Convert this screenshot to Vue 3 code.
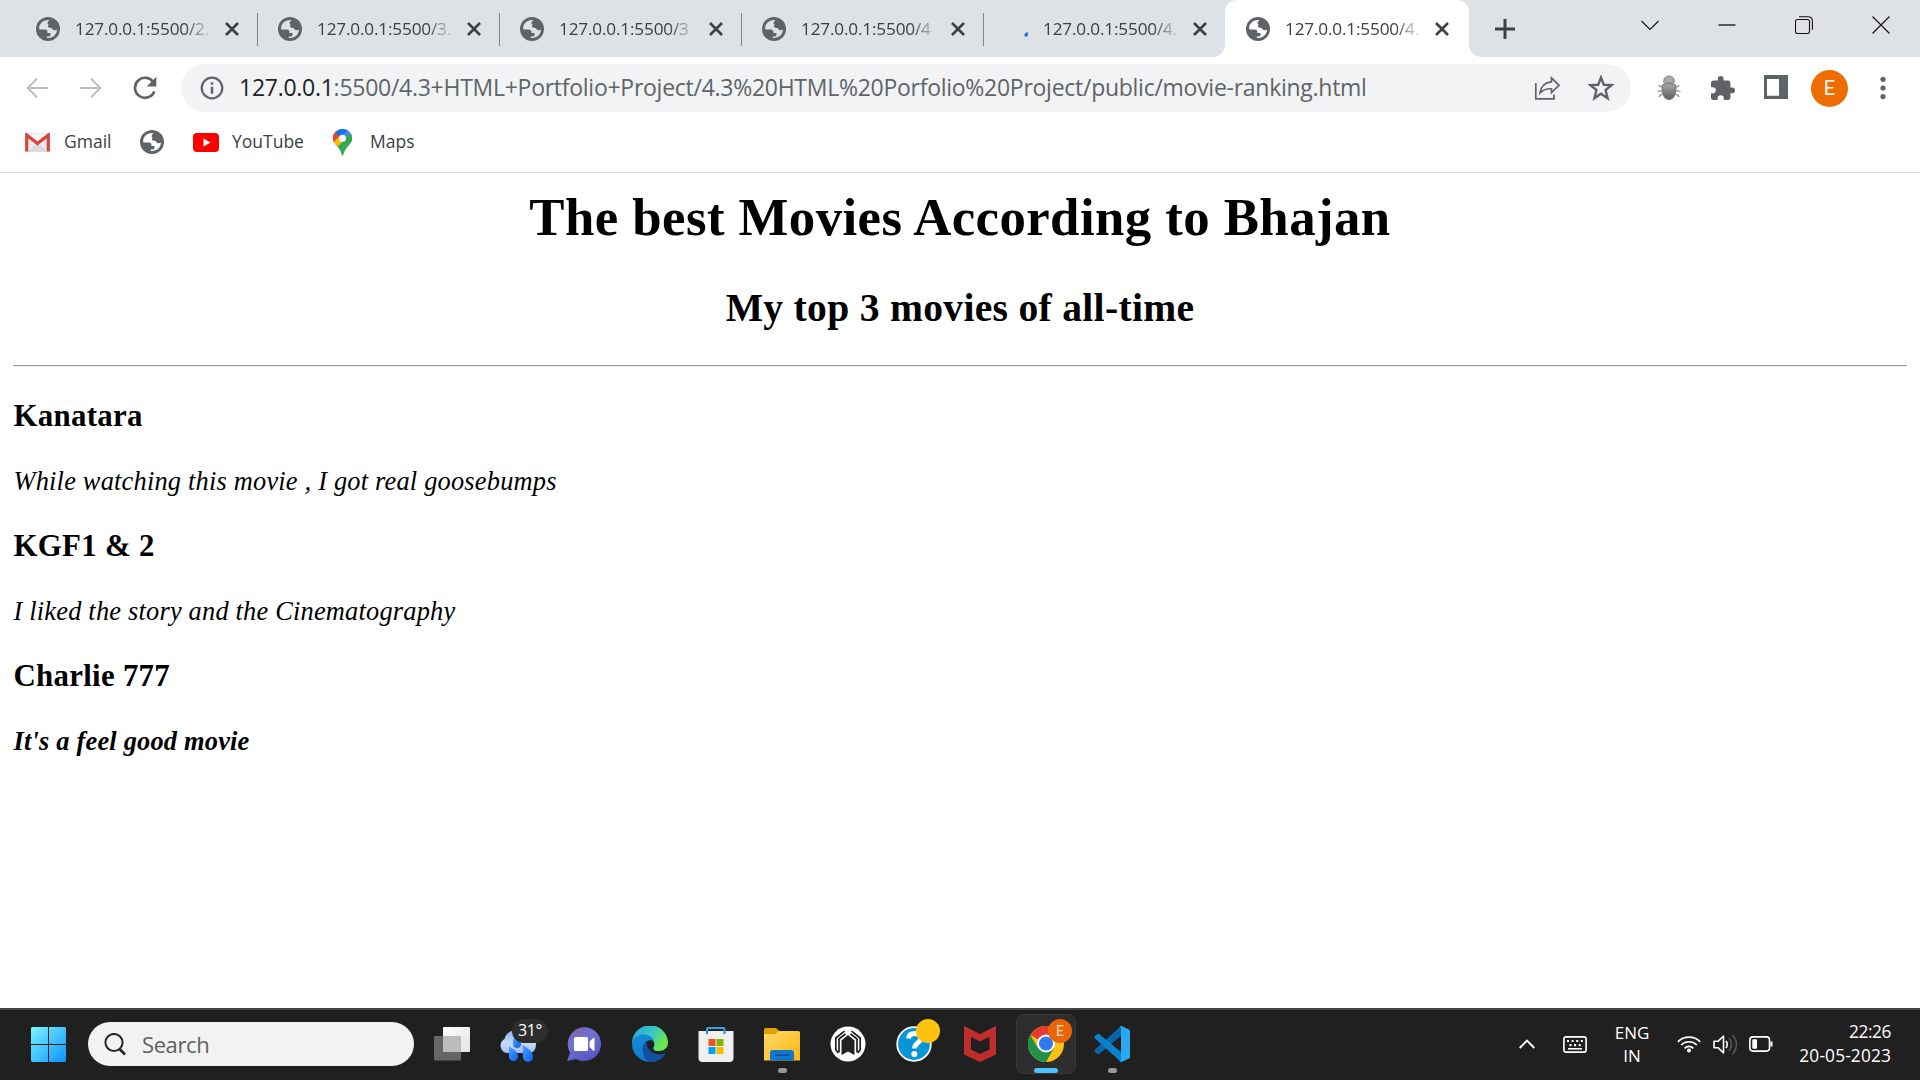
<script setup>
const tabs = [
  { title: '127.0.0.1:5500/2.', icon: 'globe' },
  { title: '127.0.0.1:5500/3.', icon: 'globe' },
  { title: '127.0.0.1:5500/3', icon: 'globe' },
  { title: '127.0.0.1:5500/4', icon: 'globe' },
  { title: '127.0.0.1:5500/4.', icon: 'loading' },
  { title: '127.0.0.1:5500/4.', icon: 'globe', active: true }
]
const globeLand =
  'M13.5 3.1C8.5 2.5 4.2 5.4 3.2 9.8C3.1 11 3.2 12 3.5 12.6H8.6C10.6 12.6 11.4 13.6 11.4 14.8V16H14.5V18C14.5 19.2 13 19.4 10.8 19.6V20.9C16.5 21.6 21 17.5 20.9 12.6C19 13.8 17 13.2 16.4 12C16 10.8 14.5 10.6 13 10.4C11.5 10 11.5 8.6 12.8 8C10.8 6.4 11.6 5 13.5 3.1Z'
const movies = [
  { name: 'Kanatara', note: 'While watching this movie , I got real goosebumps' },
  { name: 'KGF1 & 2', note: 'I liked the story and the Cinematography' },
  { name: 'Charlie 777', note: "It's a feel good movie", strong: true }
]
</script>

<template>
  <div class="screen">
    <header class="tabstrip">
      <div
        v-for="(tab, i) in tabs"
        :key="i"
        class="tab"
        :class="{ active: tab.active, last: i === 4 }"
      >
        <svg v-if="tab.icon === 'globe'" class="favicon" viewBox="0 0 24 24">
          <circle cx="12" cy="12" r="12" fill="#5f6368" />
          <path :d="globeLand" :fill="tab.active ? '#fff' : '#dee1e6'" />
        </svg>
        <svg v-else class="favicon loading" viewBox="0 0 24 24">
          <path d="M22.2 17.9L22.9 17.1" stroke="#1a73e8" stroke-width="3.4" stroke-linecap="round" />
        </svg>
        <span class="tab-title">{{ tab.title }}</span>
        <svg class="tab-close" viewBox="0 0 14 14">
          <path d="M1 1L13 13M13 1L1 13" stroke="#3c4043" stroke-width="2.6" />
        </svg>
      </div>
      <svg class="new-tab" viewBox="0 0 20 20">
        <path d="M10 0V20M0 10H20" stroke="#3c4043" stroke-width="3" />
      </svg>
      <div class="window-controls">
        <svg viewBox="0 0 18 18"><path d="M.5 5L9 13.5L17.5 5" /></svg>
        <svg viewBox="0 0 18 18"><path d="M.5 9H17.5" stroke-width="1.3" /></svg>
        <svg viewBox="0 0 18 18">
          <rect x=".5" y="3.5" width="14" height="14" rx="2" />
          <path d="M4 .8H13C16 .8 17.4 2.4 17.4 5V13.8" />
        </svg>
        <svg viewBox="0 0 18 18"><path d="M.5 .5L17.5 17.5M17.5 .5L.5 17.5" /></svg>
      </div>
    </header>

    <div class="toolbar">
      <svg class="nav" viewBox="0 0 24 24" fill="none" stroke="#babcbe" stroke-width="2.2">
        <path d="M23.5 12H2.5M12 1.8L2 12L12 22.2" />
      </svg>
      <svg class="nav forward" viewBox="0 0 24 24" fill="none" stroke="#babcbe" stroke-width="2.2">
        <path d="M.5 12H21.5M12 1.8L22 12L12 22.2" />
      </svg>
      <svg class="nav reload" viewBox="0 0 24 24">
        <path d="M20.6 6.6A10 10 0 1 0 21.3 15.5" fill="none" stroke="#5f6368" stroke-width="2.7" />
        <path d="M23.3 .8V10.4H13.7Z" fill="#5f6368" />
      </svg>
      <div class="omnibox">
        <svg class="info" viewBox="0 0 24 24">
          <circle cx="12" cy="12" r="10.3" fill="none" stroke="#5f6368" stroke-width="2.2" />
          <path d="M12 6.3V8.8M12 10.7V17.7" stroke="#5f6368" stroke-width="2.5" />
        </svg>
        <span class="url"><span class="host">127.0.0.1</span>:5500/4.3+HTML+Portfolio+Project/4.3%20HTML%20Porfolio%20Project/public/movie-ranking.html</span>
        <svg class="share" viewBox="0 0 26 24" fill="none" stroke="#5f6368" stroke-width="1.7">
          <path d="M1.8 7V22.8H20V18.6" />
          <path d="M17.5 1.8L25 9.3L17.5 16.5V12.8C12.5 12.4 9.2 13.6 6 17C6.9 10.5 10.5 6.3 17.5 5.8Z" />
        </svg>
        <svg class="star" viewBox="0 0 24 24">
          <path
            d="M12 2.3L14.6 9L21.8 9.4L16.2 13.9L18.1 21.4L12 17.3L5.9 21.4L7.8 13.9L2.2 9.4L9.4 9Z"
            fill="none"
            stroke="#5f6368"
            stroke-width="2.2"
          />
        </svg>
      </div>
      <svg class="bug" viewBox="0 0 24 26">
        <defs>
          <linearGradient id="bugFill" x1="0" y1="0" x2="0" y2="1">
            <stop offset="0" stop-color="#aaa" />
            <stop offset="1" stop-color="#5c5c5c" />
          </linearGradient>
        </defs>
        <path d="M7 8C6 4 8 1 12 1S18 4 17 8Z" fill="#aaa" stroke="#808080" />
        <path d="M5.5 9.5Q12 7.5 18.5 9.5C20 16 18 24.5 12 24.5S4 16 5.5 9.5Z" fill="url(#bugFill)" stroke="#777" />
        <path
          d="M5 12Q3 12 2 10M19 12Q21 12 22 10M5 16H.5M19 16H23.5M5.5 19.5Q3 19.5 2 22M18.500 19.5Q21 19.5 22 22"
          fill="none"
          stroke="#777"
          stroke-width="1.2"
        />
      </svg>
      <svg class="puzzle" viewBox="2 1 21 21">
        <path
          fill="#5f6368"
          d="M20.5 11H19V7C19 5.9 18.1 5 17 5H13V3.5A2.5 2.5 0 0 0 8 3.5V5H4C2.9 5 2 5.9 2 7V10.8H3.5A2.7 2.7 0 0 1 3.5 16.2H2V20C2 21.100 2.900 22 4 22H7.800V20.5A2.7 2.7 0 0 1 13.2 20.5V22H17C18.1 22 19 21.1 19 20V16H20.5A2.5 2.5 0 0 0 20.5 11Z"
        />
      </svg>
      <svg class="panel" viewBox="0 0 24 24">
        <path d="M0 0H24V24H0ZM3 4V20.7H15V4Z" fill="#5f6368" fill-rule="evenodd" />
      </svg>
      <span class="avatar">E</span>
      <svg class="dots" viewBox="0 0 6 24" fill="#5f6368">
        <circle cx="3" cy="3.3" r="2.6" /><circle cx="3" cy="12" r="2.6" /><circle cx="3" cy="20.6" r="2.6" />
      </svg>
    </div>

    <nav class="bookmarks">
      <svg class="gmail" viewBox="0 0 25 19">
        <rect width="25" height="19" rx="1.5" fill="#e9e9e9" />
        <path d="M3 19L12.5 9L22 19" fill="#dcdcdc" />
        <path d="M3 1H22L12.5 8.5Z" fill="#f7f7f7" />
        <path d="M1.7 18.5V2L12.5 10.5L23.3 2V18.5" fill="none" stroke="#d9453a" stroke-width="3.2" />
      </svg>
      <span class="bm-gmail">Gmail</span>
      <svg class="favicon" viewBox="0 0 24 24">
        <circle cx="12" cy="12" r="12" fill="#5f6368" />
        <path :d="globeLand" fill="#fff" />
      </svg>
      <svg class="youtube" viewBox="0 0 26 19">
        <rect width="26" height="19" rx="4" fill="#f00" />
        <path d="M10.5 5.5V13.5L17.5 9.5Z" fill="#fff" />
      </svg>
      <span class="bm-youtube">YouTube</span>
      <svg class="maps" viewBox="0 0 19 27">
        <defs>
          <clipPath id="pin">
            <path d="M9.5 0A9.3 9.3 0 0 1 19 9.4C19 15.5 12 18 10.4 25.5Q9.5 28 8.6 25.5C7.5 18 0 15.5 0 9.4A9.3 9.3 0 0 1 9.5 0Z" />
          </clipPath>
        </defs>
        <g clip-path="url(#pin)">
          <rect width="19" height="27" fill="#34a853" />
          <path d="M0 13L9.5 9L4 2L-2 0V14Z" fill="#ea4335" />
          <path d="M0 13.5L7 6.5L12.5 10L3.3 19L-1 18Z" fill="#fbbc04" />
          <path d="M0 13L7 6.5L3 2L-2 0Z" fill="#ea4335" />
          <path d="M2 3L8 9L19 -1L9 -2Z" fill="#1a73e8" />
          <path d="M8 8.5L15.5 0L20 7L14 7Z" fill="#4285f4" />
          <path d="M17.5 4.5L11 11L20 13V4Z" fill="#34a853" />
        </g>
        <circle cx="9.5" cy="9.3" r="3.5" fill="#fff" />
      </svg>
      <span class="bm-maps">Maps</span>
    </nav>

    <main class="page">
      <h1>The best Movies According to Bhajan</h1>
      <h2>My top 3 movies of all-time</h2>
      <hr />
      <section v-for="movie in movies" :key="movie.name">
        <h3>{{ movie.name }}</h3>
        <p :class="{ strong: movie.strong }">{{ movie.note }}</p>
      </section>
    </main>

    <footer class="taskbar">
      <svg class="start" viewBox="0 0 35 35">
        <defs>
          <linearGradient id="winFill" gradientUnits="userSpaceOnUse" x1="0" y1="0" x2="35" y2="35">
            <stop offset="0" stop-color="#7df3ff" />
            <stop offset="1" stop-color="#0a94ff" />
          </linearGradient>
        </defs>
        <path d="M1 0H17V17H0V1ZM18 0H34L35 1V17H18ZM0 18H17V35H1L0 34ZM18 18H35V34L34 35H18Z" fill="url(#winFill)" />
      </svg>
      <div class="search">
        <svg viewBox="0 0 22 23" fill="none" stroke="#262626">
          <circle cx="10" cy="9.5" r="8.6" stroke-width="2" />
          <path d="M15.5 16L21 21.5" stroke-width="2.6" />
        </svg>
        <span>Search</span>
      </div>
      <div class="apps">
        <div class="app">
          <svg viewBox="0 0 36 36">
            <defs>
              <linearGradient id="tvFront" x1="0" y1="0" x2="1" y2="1">
                <stop offset="0" stop-color="#fff" /><stop offset="1" stop-color="#e2e2e2" />
              </linearGradient>
            </defs>
            <rect x="9" y="1" width="27" height="25" rx="1" fill="url(#tvFront)" />
            <rect x="0" y="10" width="27" height="24.5" rx="1" fill="#666" />
            <path d="M9 10H27V26H9Z" fill="#bcbcbc" />
          </svg>
        </div>
        <div class="app">
          <svg viewBox="0 0 36 36">
            <defs>
              <linearGradient id="cloud" x1="0" y1="0" x2="0" y2="1">
                <stop offset="0" stop-color="#8db4f5" /><stop offset=".6" stop-color="#c9daf8" /><stop offset="1" stop-color="#9bbcf0" />
              </linearGradient>
              <linearGradient id="drop" x1="0" y1="0" x2="1" y2="1">
                <stop offset="0" stop-color="#4aa5fb" /><stop offset="1" stop-color="#0a5cf5" />
              </linearGradient>
            </defs>
            <path d="M7 27A7.500 7.500 0 0 1 4.500 13A11 11 0 0 1 24 9Q36 10 36 18.500Q36 27 28 27Z" fill="url(#cloud)" />
            <g fill="url(#drop)">
              <path d="M14.500 10Q21 14 21 18A4 4 0 0 1 13 18Q13 14 14.500 10Z" />
              <path d="M9 20.500Q18 25 18 30.500A4.500 4.500 0 0 1 9 30.500Z" />
              <path d="M22.500 19Q33 24.500 33 31A5 5 0 0 1 23 31Z" />
            </g>
          </svg>
          <span class="temp">31°</span>
        </div>
        <div class="app">
          <svg viewBox="0 0 36 36">
            <defs>
              <linearGradient id="chat" x1="0" y1="0" x2=".6" y2="1">
                <stop offset="0" stop-color="#8b5a9c" /><stop offset=".45" stop-color="#6f73cf" /><stop offset="1" stop-color="#5855c8" />
              </linearGradient>
            </defs>
            <path d="M18 1A17 17 0 1 1 10 33L2 35Q1 35 1.500 33.500L4 26.500A17 17 0 0 1 18 1Z" fill="url(#chat)" />
            <rect x="8" y="11" width="14" height="14" rx="1.5" fill="#fff" />
            <path d="M24 15.5L28 12V24.5L24 21Z" fill="#fff" stroke="#fff" stroke-linejoin="round" />
          </svg>
        </div>
        <div class="app">
          <svg viewBox="0 0 36 36">
            <defs>
              <linearGradient id="edgeTop" x1="0" y1="0" x2="1" y2=".5">
                <stop offset="0" stop-color="#1fa4df" /><stop offset=".55" stop-color="#37c6c5" /><stop offset="1" stop-color="#6bea4b" />
              </linearGradient>
              <linearGradient id="edgeLeft" x1="0" y1="0" x2=".5" y2="1">
                <stop offset="0" stop-color="#1790d5" /><stop offset="1" stop-color="#0b77cf" />
              </linearGradient>
            </defs>
            <path d="M0 18A18 18 0 0 1 36 16.5C36 22 32 25 27 25C23 25 20.5 23.7 21.5 21.5C24 17 21 11 12 9C6 9 1 12 0 18Z" fill="url(#edgeTop)" />
            <path d="M0 18C1 11 7 8.5 12 8.5C18 8.5 22 12.5 22 16C20 13 14 13.5 12.5 18.5C10.5 26 18 34 26 34A18 18 0 0 1 0 18Z" fill="url(#edgeLeft)" />
            <path d="M14.5 15C8 20 10 31 17 36C24 36.5 29.5 34 33 28.5C33.5 27.5 33 27 32 27.5C22 31 13.5 23 14.5 15Z" fill="#124f9e" />
          </svg>
        </div>
        <div class="app">
          <svg viewBox="0 0 36 36">
            <path d="M9 8V3Q9 2 10 2H25.5Q26.5 2 26.5 3V8" fill="none" stroke="#28a8ea" stroke-width="2" />
            <path d="M.5 5H35.5V32Q35.5 36 31.5 36H4.5Q.5 36 .5 32Z" fill="#efefef" />
            <path d="M9 5V8M26.5 5V8" stroke="#1593d2" stroke-width="2" />
            <path d="M10.5 13H17.5V20H10.5Z" fill="#f25022" /><path d="M18.5 13H25.5V20H18.5Z" fill="#7fba00" />
            <path d="M10.5 21H17.5V28H10.5Z" fill="#00a4ef" /><path d="M18.5 21H25.5V28H18.5Z" fill="#ffb900" />
          </svg>
        </div>
        <div class="app running">
          <svg viewBox="0 0 36 36">
            <defs>
              <linearGradient id="folder" x1="0" y1="0" x2="1" y2="1">
                <stop offset="0" stop-color="#ffd868" /><stop offset="1" stop-color="#fbb810" />
              </linearGradient>
            </defs>
            <path d="M0 3.5Q0 2 1.5 2H12L16 5.5V14H0Z" fill="#e0a000" />
            <path d="M0 8H11L15 5H34.5Q36 5 36 6.5V34.5H0Z" fill="url(#folder)" />
            <path d="M6 34.5V27Q6 24 9 24H27Q30 24 30 27V34.5Z" fill="#0d78cc" />
            <path d="M11 29.2H25" stroke="#0b4c8e" stroke-width="1.5" />
          </svg>
        </div>
        <div class="app">
          <svg viewBox="0 0 36 36" fill="none" stroke="#202020" stroke-width="1.7">
            <circle cx="18" cy="18" r="17.5" fill="#fff" stroke="none" />
            <path d="M14.500 5.200L5.800 12V23.500L8 27M21.500 5.200L30.200 12V23.500L28 27" />
            <path d="M15.500 8L9 13V26.500M20.500 8L27 13V26.500" />
            <path d="M11.500 29V14.500L18 9L24.500 14.500V29L18 25.500Z" fill="#222" stroke="none" />
          </svg>
        </div>
        <div class="app">
          <svg viewBox="0 0 36 36">
            <circle cx="18" cy="18" r="16.8" fill="#0695d7" stroke="#fff" stroke-width="1.8" />
            <path d="M12.5 12.5Q13 7.5 18.5 7.5Q24.5 7.5 24.5 12.5C24.5 17 18.5 17 18.5 22.5" fill="none" stroke="#fff" stroke-width="4.8" />
            <circle cx="18.3" cy="28" r="3" fill="#fff" />
          </svg>
          <span class="badge yellow"></span>
        </div>
        <div class="app">
          <svg viewBox="0 0 36 36">
            <path d="M2 0L18 8L34 0V28.5L18 36L2 28.5ZM9 11V23.5L18 28L27.5 23.5V11L18 15.5Z" fill="#bf2c2b" fill-rule="evenodd" />
          </svg>
        </div>
        <div class="app focused">
          <svg viewBox="0 0 36 36">
            <circle cx="18" cy="18" r="18" fill="#fbc116" />
            <path d="M18 18L2.4 9A18 18 0 0 1 33.6 9H18Z" fill="#e33b2e" />
            <path d="M2.4 9A18 18 0 0 0 18 36L25.8 22.5L18 18L10.2 22.5Z" fill="#219149" />
            <circle cx="18" cy="17.5" r="9" fill="#fff" /><circle cx="18" cy="17.5" r="7" fill="#3079ee" />
          </svg>
          <span class="badge orange">E</span>
        </div>
        <div class="app running">
          <svg viewBox="0 0 36 36">
            <path d="M27 0L1 23.5Q-.3 25 1 26L3 27.8Q4.2 28.5 5.4 27.7L27 10Z" fill="#0865a9" />
            <path d="M27 36L1 12.5Q-.3 11 1 10L3 8.2Q4.2 7.5 5.4 8.3L27 26Z" fill="#0a82ce" />
            <path d="M25.5 0Q26.5 -.3 27.5 .1L35 3.5Q36 4 36 5V31Q36 32 35 32.5L27.5 35.9Q26.5 36.3 25.5 36Q27 35.5 27 33V3Q27 .5 25.5 0Z" fill="#2aa9f2" />
          </svg>
        </div>
      </div>
      <div class="tray">
        <svg class="chevron" viewBox="0 0 16 10"><path d="M.7 9L8 1.7L15.3 9" fill="none" stroke="#fff" stroke-width="1.9" /></svg>
        <svg class="keyboard" viewBox="0 0 24 17" fill="none" stroke="#fff">
          <rect x=".9" y=".9" width="22.2" height="15.2" rx="2.2" stroke-width="1.6" />
          <path d="M4 5H20" stroke-width="2.2" stroke-dasharray="2 2.6" />
          <path d="M6.5 9.2H18" stroke-width="2.2" stroke-dasharray="2 2.6" />
          <path d="M5 12.8H19" stroke-width="1.6" />
        </svg>
        <div class="lang"><span>ENG</span><span>IN</span></div>
        <svg class="wifi" viewBox="0 0 24 18" fill="none" stroke="#fff" stroke-width="1.7">
          <path d="M.8 6.8A15.8 15.8 0 0 1 23.2 6.8M4.2 10A11 11 0 0 1 19.8 10M7.6 13.3A6.2 6.2 0 0 1 16.4 13.3" />
          <circle cx="12" cy="15.5" r="2" fill="#fff" stroke="none" />
        </svg>
        <svg class="volume" viewBox="0 0 25 21" fill="none" stroke="#fff" stroke-width="1.6">
          <path d="M1 7.3H5L10.5 2V19L5 13.7H1Z" stroke-linejoin="round" />
          <path d="M13 7Q15.5 10.5 13 14" />
          <path d="M16 4Q21 10.5 16 17M19.5 1Q27.5 10.5 19.5 20" stroke="#555" />
        </svg>
        <svg class="battery" viewBox="0 0 24 16">
          <rect x=".9" y=".9" width="19.6" height="14.2" rx="3" fill="none" stroke="#fff" stroke-width="1.6" />
          <rect x="3.3" y="3.3" width="4.7" height="9.4" rx="1" fill="#fff" />
          <path d="M21.5 5.5H23.5V10.5H21.5Z" fill="#fff" />
        </svg>
        <div class="clock"><span>22:26</span><span class="date">20-05-2023</span></div>
      </div>
    </footer>
  </div>
</template>

<style>
html,
body {
  margin: 0;
  overflow: hidden;
}
</style>

<style scoped>
.screen {
  width: 1920px;
  height: 1080px;
  display: flex;
  flex-direction: column;
  background: #fff;
  font-family: "Open Sans", "Noto Sans", sans-serif;
}
svg {
  display: block;
  flex: none;
}
.tabstrip {
  box-sizing: border-box;
  height: 57px;
  flex: none;
  padding-left: 15px;
  display: flex;
  align-items: center;
  background: #dee1e6;
}
.tab {
  box-sizing: border-box;
  width: 242px;
  height: 57px;
  padding-left: 21px;
  display: flex;
  align-items: center;
  position: relative;
  color: #3c4043;
}
.tab::after {
  content: "";
  position: absolute;
  right: -1px;
  top: 13px;
  width: 1.5px;
  height: 33px;
  background: #80868b;
}
.tab.last::after {
  display: none;
}
.tab.active {
  width: 244px;
  background: #fff;
  border-radius: 12px 12px 0 0;
}
.tab.active::before,
.tab.active::after {
  content: "";
  display: block;
  position: absolute;
  top: auto;
  bottom: 0;
  width: 12px;
  height: 12px;
  background: radial-gradient(circle at 0 0, transparent 11.5px, #fff 12px);
  left: -12px;
}
.tab.active::after {
  left: auto;
  right: -12px;
  background: radial-gradient(circle at 100% 0, transparent 11.5px, #fff 12px);
}
.favicon {
  width: 24px;
  height: 24px;
}
.tab-title {
  width: 136px;
  margin-left: 15px;
  overflow: hidden;
  white-space: nowrap;
  font-size: 17.2px;
  letter-spacing: -0.17px;
  -webkit-mask-image: linear-gradient(90deg, #000 110px, transparent 137px);
  mask-image: linear-gradient(90deg, #000 110px, transparent 137px);
}
.tab-close {
  width: 14px;
  height: 14px;
  margin-left: 13.5px;
}
.new-tab {
  width: 20px;
  height: 20px;
  margin-left: 26px;
}
.window-controls {
  margin: -8px 30px 0 auto;
  display: flex;
  gap: 59px;
  fill: none;
  stroke: #111;
  stroke-width: 1.1;
}
.window-controls svg {
  width: 18px;
  height: 18px;
}
.toolbar {
  box-sizing: border-box;
  height: 62px;
  flex: none;
  display: flex;
  align-items: center;
  padding-left: 25px;
}
.nav {
  width: 24px;
  height: 22px;
}
.forward {
  margin-left: 30px;
}
.reload {
  width: 24px;
  height: 24px;
  margin-left: 30px;
}
.omnibox {
  box-sizing: border-box;
  width: 1450px;
  height: 48px;
  margin-left: 24px;
  padding: 0 17px 0 19px;
  border-radius: 24px;
  background: #f1f3f4;
  display: flex;
  align-items: center;
}
.info {
  width: 24px;
  height: 24px;
}
.url {
  flex: 1;
  margin-left: 15px;
  padding-bottom: 2px;
  font-size: 23px;
  letter-spacing: -0.27px;
  white-space: nowrap;
  color: #606468;
}
.host {
  color: #202124;
}
.share {
  width: 26px;
  height: 24px;
}
.star {
  width: 26px;
  height: 26px;
  margin-left: 28px;
}
.bug {
  width: 24px;
  height: 26px;
  margin-left: 26px;
}
.puzzle {
  width: 24px;
  height: 24px;
  margin-left: 30px;
}
.panel {
  width: 24px;
  height: 24px;
  margin-left: 29px;
  margin-bottom: 2px;
}
.avatar {
  width: 37px;
  height: 37px;
  margin-left: 23px;
  border-radius: 50%;
  background: #ef6c00;
  color: #fff;
  font: 20px/37px Roboto, sans-serif;
  text-align: center;
}
.dots {
  width: 6px;
  height: 24px;
  margin-left: 32px;
}
.bookmarks {
  box-sizing: border-box;
  height: 54px;
  flex: none;
  padding: 0 0 7px 25px;
  display: flex;
  align-items: center;
  border-bottom: 1.5px solid #dadce0;
  font-size: 17.5px;
  color: #3c4043;
}
.bookmarks span {
  padding-bottom: 2px;
}
.gmail {
  width: 25px;
  height: 19px;
}
.bm-gmail {
  width: 75.5px;
  margin-left: 14px;
}
.youtube {
  width: 26px;
  height: 19px;
  margin-left: 29px;
}
.bm-youtube {
  width: 101px;
  margin-left: 13.5px;
}
.maps {
  width: 19px;
  height: 27px;
}
.bm-maps {
  margin-left: 18px;
}
.page {
  flex: 1;
  min-height: 0;
  padding: 0 13px;
  font-family: "Liberation Serif", "Times New Roman", serif;
  color: #000;
}
h1,
h2,
h3,
p {
  margin: 0;
  white-space: nowrap;
}
h1 {
  padding-top: 14px;
  text-align: center;
  font-size: 52.8px;
  line-height: 60px;
  letter-spacing: 0.43px;
}
h2 {
  padding-top: 39px;
  text-align: center;
  font-size: 39.6px;
  line-height: 45px;
  letter-spacing: 0.3px;
}
hr {
  height: 1px;
  margin: 34px 0 17px;
  border: 0;
  background: #9a9a9a;
  border-bottom: 1px solid #eee;
}
h3 {
  padding-left: 0.5px;
  font-size: 30.9px;
  line-height: 64px;
  letter-spacing: 0.27px;
}
p {
  padding-left: 0.5px;
  font-size: 26.4px;
  line-height: 66px;
  font-style: italic;
  letter-spacing: 0.2px;
}
p.strong {
  font-weight: bold;
}
.taskbar {
  box-sizing: border-box;
  height: 72px;
  flex: none;
  display: flex;
  align-items: center;
  padding: 0 29px 2px 31px;
  border-top: 2px solid #464646;
  background: #202020;
  color: #fff;
}
.start {
  width: 35px;
  height: 35px;
}
.search {
  box-sizing: border-box;
  width: 326px;
  height: 44px;
  margin-left: 22px;
  padding-left: 16px;
  border-radius: 22px;
  background: #f2f2f2;
  display: flex;
  align-items: center;
}
.search svg {
  width: 22px;
  height: 23px;
}
.search span {
  margin-left: 16px;
  font-size: 22px;
  letter-spacing: -0.4px;
  color: #5f5f5f;
}
.apps {
  display: flex;
  gap: 6px;
  margin-left: 8px;
}
.app {
  box-sizing: border-box;
  width: 60px;
  height: 60px;
  border-radius: 7px;
  position: relative;
  display: flex;
  align-items: center;
  justify-content: center;
}
.app svg {
  width: 36px;
  height: 36px;
}
.focused {
  background: #2d2d2d;
  border: 1px solid #383838;
}
.running::after,
.focused::after {
  content: "";
  position: absolute;
  bottom: 1px;
  left: 25.5px;
  width: 9px;
  height: 5px;
  border-radius: 3px;
  background: #999;
}
.focused::after {
  left: 17px;
  bottom: 0;
  width: 24px;
  background: #4cc2ff;
}
.temp {
  position: absolute;
  left: 24px;
  top: 5px;
  width: 36px;
  height: 24px;
  border-radius: 12px;
  background: #2d2d2d;
  font-size: 16px;
  line-height: 23px;
  letter-spacing: -0.4px;
  text-align: center;
}
.badge {
  position: absolute;
  left: 32px;
  top: 5px;
  width: 24px;
  height: 24px;
  border-radius: 50%;
  text-align: center;
  font: 14px/24px Roboto, sans-serif;
}
.yellow {
  background: #ffc20e;
}
.orange {
  left: 31px;
  top: 4px;
  background: #e8650a;
  color: #ffd9bd;
}
.tray {
  margin-left: auto;
  display: flex;
  align-items: center;
}
.chevron {
  width: 16px;
  height: 10px;
}
.keyboard {
  width: 24px;
  height: 17px;
  margin-left: 28px;
}
.lang {
  width: 40px;
  margin-left: 25px;
  display: flex;
  flex-direction: column;
  align-items: center;
  font-size: 17px;
  line-height: 23px;
}
.wifi {
  width: 24px;
  height: 18px;
  margin-left: 25px;
}
.volume {
  width: 25px;
  height: 21px;
  margin-left: 12px;
}
.battery {
  width: 24px;
  height: 16px;
  margin-left: 11px;
}
.clock {
  width: 97px;
  margin-left: 21px;
  display: flex;
  flex-direction: column;
  align-items: flex-end;
  font-size: 17.3px;
  line-height: 24px;
  letter-spacing: -0.4px;
  white-space: nowrap;
}
.date {
  letter-spacing: 0.15px;
}
</style>
